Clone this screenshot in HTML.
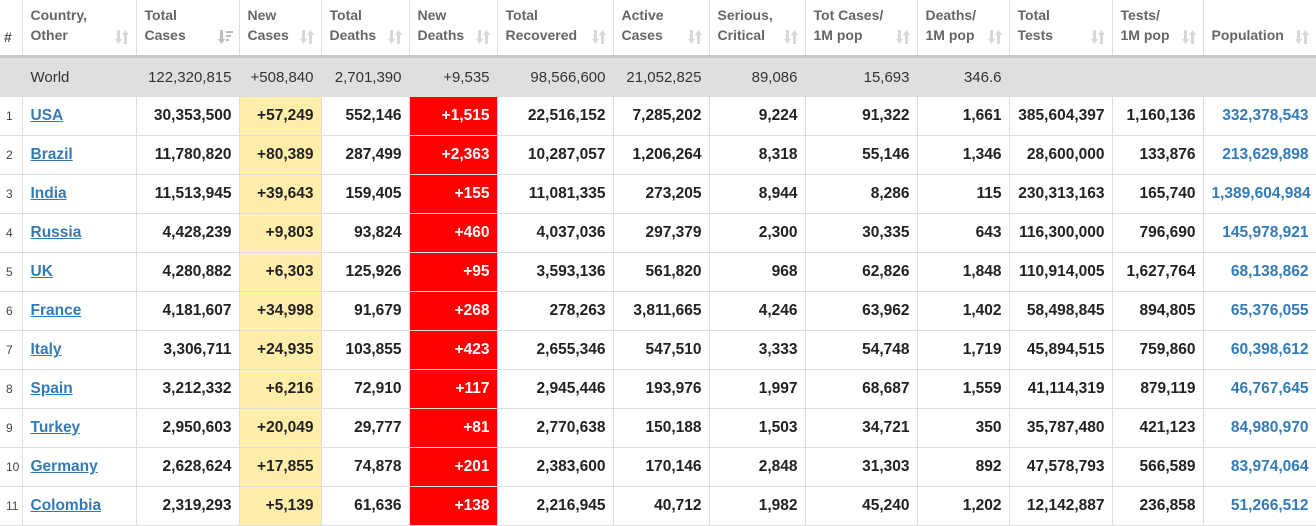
<!DOCTYPE html><html><head><style>
body{margin:0;background:#fff;font-family:"Liberation Sans",Arial,sans-serif;}
table{border-collapse:collapse;table-layout:fixed;width:1316px;}
td,th{border:1px solid #ddd;padding:0 7px 0 8px;font-size:15.5px;white-space:nowrap;overflow:hidden;}
th{height:47px;text-align:left;color:#666;font-size:14px;font-weight:bold;line-height:20px;border-bottom:3px solid #c8c8c8;border-top:none;position:relative;vertical-align:middle;padding-top:0;padding-bottom:5px}
th svg{position:absolute;right:6px;bottom:10px}
th:first-child{vertical-align:bottom;padding-bottom:8px;color:#555}
tr.w td{background:#dfdfdf;height:38px;color:#333;font-weight:normal;text-align:right;font-size:15px}
tr.w td:nth-child(2){text-align:left}
tr.r td{height:38px;font-weight:bold;color:#222;text-align:right}
tr.r td:first-child{font-weight:normal;color:#444;font-size:12px;text-align:left;padding:0 0 0 6px}
tr.r td:nth-child(2){text-align:left}
a{color:#337ab7;text-decoration:underline}
tr.r td:nth-child(4){background:#ffeeaa}
tr.r td:nth-child(6){background:#f00;color:#fff}
tr.r td:last-child{color:#337ab7}
td:first-child,th:first-child{border-left:none}
</style></head><body>
<svg width="0" height="0" style="position:absolute"><defs><g id="s" fill="#d8d8d8"><rect x="2" y="1" width="3" height="10"/><path d="M0 10h7l-3.5 5z"/><rect x="9" y="5" width="3" height="10"/><path d="M7 6h7l-3.5-5z"/></g><g id="d" fill="#bdbdbd"><rect x="2" y="1" width="3" height="10"/><path d="M0 10h7l-3.5 5z"/><rect x="8" y="2" width="7" height="2"/><rect x="8" y="6" width="5" height="2"/><rect x="8" y="10" width="3" height="2"/></g></defs></svg>
<table>
<colgroup><col style="width:22px"><col style="width:114px"><col style="width:103px"><col style="width:82px"><col style="width:88px"><col style="width:88px"><col style="width:116px"><col style="width:96px"><col style="width:96px"><col style="width:112px"><col style="width:92px"><col style="width:103px"><col style="width:91px"><col style="width:113px"></colgroup>
<tr><th style="padding:0 0 8px 4px">#</th>
<th>Country,<br>Other<svg width="15" height="16"><use href="#s"/></svg></th>
<th>Total<br>Cases<svg width="15" height="16"><use href="#d"/></svg></th>
<th>New<br>Cases<svg width="15" height="16"><use href="#s"/></svg></th>
<th>Total<br>Deaths<svg width="15" height="16"><use href="#s"/></svg></th>
<th>New<br>Deaths<svg width="15" height="16"><use href="#s"/></svg></th>
<th>Total<br>Recovered<svg width="15" height="16"><use href="#s"/></svg></th>
<th>Active<br>Cases<svg width="15" height="16"><use href="#s"/></svg></th>
<th>Serious,<br>Critical<svg width="15" height="16"><use href="#s"/></svg></th>
<th>Tot Cases/<br>1M pop<svg width="15" height="16"><use href="#s"/></svg></th>
<th>Deaths/<br>1M pop<svg width="15" height="16"><use href="#s"/></svg></th>
<th>Total<br>Tests<svg width="15" height="16"><use href="#s"/></svg></th>
<th>Tests/<br>1M pop<svg width="15" height="16"><use href="#s"/></svg></th>
<th><br>Population<svg width="15" height="16"><use href="#s"/></svg></th></tr>
<tr class="w"><td></td><td>World</td><td>122,320,815</td><td>+508,840</td><td>2,701,390</td><td>+9,535</td><td>98,566,600</td><td>21,052,825</td><td>89,086</td><td>15,693</td><td>346.6</td><td></td><td></td><td></td></tr>
<tr class="r"><td>1</td><td><a>USA</a></td><td>30,353,500</td><td>+57,249</td><td>552,146</td><td>+1,515</td><td>22,516,152</td><td>7,285,202</td><td>9,224</td><td>91,322</td><td>1,661</td><td>385,604,397</td><td>1,160,136</td><td>332,378,543</td></tr>
<tr class="r"><td>2</td><td><a>Brazil</a></td><td>11,780,820</td><td>+80,389</td><td>287,499</td><td>+2,363</td><td>10,287,057</td><td>1,206,264</td><td>8,318</td><td>55,146</td><td>1,346</td><td>28,600,000</td><td>133,876</td><td>213,629,898</td></tr>
<tr class="r"><td>3</td><td><a>India</a></td><td>11,513,945</td><td>+39,643</td><td>159,405</td><td>+155</td><td>11,081,335</td><td>273,205</td><td>8,944</td><td>8,286</td><td>115</td><td>230,313,163</td><td>165,740</td><td>1,389,604,984</td></tr>
<tr class="r"><td>4</td><td><a>Russia</a></td><td>4,428,239</td><td>+9,803</td><td>93,824</td><td>+460</td><td>4,037,036</td><td>297,379</td><td>2,300</td><td>30,335</td><td>643</td><td>116,300,000</td><td>796,690</td><td>145,978,921</td></tr>
<tr class="r"><td>5</td><td><a>UK</a></td><td>4,280,882</td><td>+6,303</td><td>125,926</td><td>+95</td><td>3,593,136</td><td>561,820</td><td>968</td><td>62,826</td><td>1,848</td><td>110,914,005</td><td>1,627,764</td><td>68,138,862</td></tr>
<tr class="r"><td>6</td><td><a>France</a></td><td>4,181,607</td><td>+34,998</td><td>91,679</td><td>+268</td><td>278,263</td><td>3,811,665</td><td>4,246</td><td>63,962</td><td>1,402</td><td>58,498,845</td><td>894,805</td><td>65,376,055</td></tr>
<tr class="r"><td>7</td><td><a>Italy</a></td><td>3,306,711</td><td>+24,935</td><td>103,855</td><td>+423</td><td>2,655,346</td><td>547,510</td><td>3,333</td><td>54,748</td><td>1,719</td><td>45,894,515</td><td>759,860</td><td>60,398,612</td></tr>
<tr class="r"><td>8</td><td><a>Spain</a></td><td>3,212,332</td><td>+6,216</td><td>72,910</td><td>+117</td><td>2,945,446</td><td>193,976</td><td>1,997</td><td>68,687</td><td>1,559</td><td>41,114,319</td><td>879,119</td><td>46,767,645</td></tr>
<tr class="r"><td>9</td><td><a>Turkey</a></td><td>2,950,603</td><td>+20,049</td><td>29,777</td><td>+81</td><td>2,770,638</td><td>150,188</td><td>1,503</td><td>34,721</td><td>350</td><td>35,787,480</td><td>421,123</td><td>84,980,970</td></tr>
<tr class="r"><td>10</td><td><a>Germany</a></td><td>2,628,624</td><td>+17,855</td><td>74,878</td><td>+201</td><td>2,383,600</td><td>170,146</td><td>2,848</td><td>31,303</td><td>892</td><td>47,578,793</td><td>566,589</td><td>83,974,064</td></tr>
<tr class="r"><td>11</td><td><a>Colombia</a></td><td>2,319,293</td><td>+5,139</td><td>61,636</td><td>+138</td><td>2,216,945</td><td>40,712</td><td>1,982</td><td>45,240</td><td>1,202</td><td>12,142,887</td><td>236,858</td><td>51,266,512</td></tr>
</table></body></html>
